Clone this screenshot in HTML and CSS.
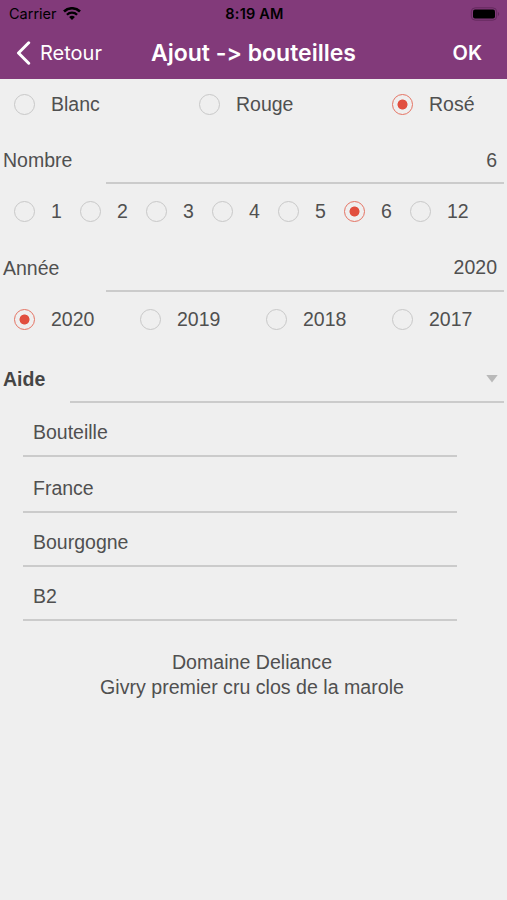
FILE: index.html
```
<!DOCTYPE html>
<html lang="fr">
<head>
<meta charset="UTF-8">
<meta name="viewport" content="width=device-width, initial-scale=1.0">
<title>Ajout -> bouteilles</title>
<link rel="stylesheet" href="styles.css">
</head>
<body>

<header>
    <div class="status">
        <div class="carrier">
            <span>Carrier</span>
            <svg width="18" height="13" viewBox="0 0 18 13">
                <path d="M1 4.5a11.5 11.5 0 0 1 16 0" fill="none" stroke="#000" stroke-width="2.6"/>
                <path d="M3.9 7.8a7.3 7.3 0 0 1 10.2 0" fill="none" stroke="#000" stroke-width="2.3"/>
                <path d="M9 13L6.1 10.1a4.1 4.1 0 0 1 5.8 0z"/>
            </svg>
        </div>
        <span class="time">8:19 AM</span>
        <svg class="battery" width="30" height="14" viewBox="0 0 30 14">
            <rect x="1.3" y="0.8" width="25.4" height="12.4" rx="4" fill="none" stroke="#64295e" stroke-width="1"/>
            <rect x="3" y="2.5" width="22" height="9" rx="2"/>
            <path d="M28 5a2.3 2.3 0 0 1 0 4z" fill="#64295e"/>
        </svg>
    </div>
    <nav>
        <a class="back">
            <svg width="15" height="24" viewBox="0 0 15 24">
                <path d="M12.7 1.8L2.5 12l10.2 10.2" fill="none" stroke="#fff" stroke-width="3" stroke-linecap="round" stroke-linejoin="round"/>
            </svg>
            <span>Retour</span>
        </a>
        <h1>Ajout -&gt; bouteilles</h1>
        <a class="ok">OK</a>
    </nav>
</header>

<main>
    <div class="radios colors">
        <label><input type="radio" name="color">Blanc</label>
        <label><input type="radio" name="color">Rouge</label>
        <label><input type="radio" name="color" checked>Rosé</label>
    </div>

    <div class="field">
        <span class="name">Nombre</span>
        <span class="value">6</span>
    </div>
    <div class="radios numbers">
        <label><input type="radio" name="number">1</label>
        <label><input type="radio" name="number">2</label>
        <label><input type="radio" name="number">3</label>
        <label><input type="radio" name="number">4</label>
        <label><input type="radio" name="number">5</label>
        <label><input type="radio" name="number" checked>6</label>
        <label><input type="radio" name="number">12</label>
    </div>

    <div class="field">
        <span class="name year">Année</span>
        <span class="value">2020</span>
    </div>
    <div class="radios years">
        <label><input type="radio" name="year" checked>2020</label>
        <label><input type="radio" name="year">2019</label>
        <label><input type="radio" name="year">2018</label>
        <label><input type="radio" name="year">2017</label>
    </div>

    <div class="field help">
        <span class="name">Aide</span>
        <span class="value"><svg width="12" height="8" viewBox="0 0 12 8"><path d="M0.3 0h11.4L6 7.6z" fill="#b9b9b9"/></svg></span>
    </div>

    <ul>
        <li>Bouteille</li>
        <li class="country">France</li>
        <li>Bourgogne</li>
        <li>B2</li>
    </ul>

    <p>Domaine Deliance<br>Givry premier cru clos de la marole</p>
</main>

</body>
</html>
```
FILE: styles.css
```
* {
    box-sizing: border-box;
}

body {
    margin: 0;
    background-color: #efefef;
    color: #505050;
    font-family: "Liberation Sans", Arial, sans-serif;
    font-size: 19.5px;
}

header {
    height: 79px;
    background-color: #823a7a;
    font-family: Inter, sans-serif;
    font-feature-settings: "calt" 0;
}

.status {
    display: grid;
    grid-template-columns: 1fr auto 1fr;
    align-items: center;
    height: 27px;
    padding: 0 7px 0 9px;
    color: #000;
    font-size: 14.5px;
}

.carrier {
    display: flex;
    align-items: center;
    gap: 6px;
}

.time {
    font-size: 14.5px;
    font-weight: 600;
    letter-spacing: 0.2px;
}

.battery {
    justify-self: end;
}

nav {
    display: grid;
    grid-template-columns: 1fr auto 1fr;
    align-items: center;
    height: 51px;
    padding: 0 16px;
    color: #fff;
}

.back {
    display: flex;
    align-items: center;
    gap: 9px;
    font-size: 20px;
}

h1 {
    margin: 0;
    font-size: 23px;
    font-weight: 600;
    white-space: nowrap;
}

.ok {
    justify-self: end;
    margin-right: 9px;
    font-size: 20px;
    font-weight: 600;
}

.radios {
    display: grid;
    align-items: center;
    height: 54px;
    padding-left: 14px;
}

.radios label {
    display: flex;
    align-items: center;
    gap: 16px;
}

.colors {
    grid-template-columns: 185px 193px auto;
    height: 50px;
}

.numbers {
    grid-template-columns: repeat(6, 66px) auto;
}

.years {
    grid-template-columns: repeat(4, 126px);
    height: 55px;
}

input[type="radio"] {
    appearance: none;
    width: 21px;
    height: 21px;
    margin: 0;
    border: 1.5px solid #c8c8c8;
    border-radius: 50%;
}

input[type="radio"]:checked {
    border-color: #e57363;
    background-image: radial-gradient(circle, #e14f3f 4.6px, transparent 5.4px);
}

.field {
    display: flex;
    height: 54px;
    padding: 0 3px;
    line-height: 59px;
}

.colors + .field {
    height: 55px;
    line-height: 62px;
}

.name {
    width: 103px;
}

.year {
    line-height: 61px;
}

.value {
    flex: 1;
    padding-right: 7px;
    border-bottom: 2px solid #cbcbcb;
    text-align: right;
}

.help .name {
    width: 67px;
    color: #454545;
    font-weight: bold;
}

.field.help {
    height: 56px;
    line-height: 64px;
}

.help .value {
    padding-right: 6px;
    line-height: 60px;
}

.help svg {
    vertical-align: middle;
}

ul {
    width: 434px;
    margin: 0 0 0 23px;
    padding: 0;
    list-style: none;
}

li {
    height: 54px;
    padding-left: 10px;
    border-bottom: 2px solid #cbcbcb;
    line-height: 59px;
}

.country {
    height: 56px;
    line-height: 62px;
}

p {
    margin: 29px 3px 0 0;
    font-size: 19.6px;
    line-height: 25px;
    text-align: center;
}
```
